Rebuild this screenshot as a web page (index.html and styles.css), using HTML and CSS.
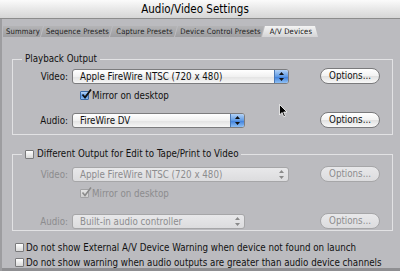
FILE: index.html
```html
<!DOCTYPE html>
<html>
  <head>
    <title>Audio/Video Settings</title>
    <meta charset="utf-8" />
    <link rel="stylesheet" href="styles.css">
  </head>
  <body>
    <div class="window">
      <div class="titlebar">Audio/Video Settings</div>
      <div class="tabs">
        <span class="tab first t-summary">Summary</span>
        <span class="tab t-sequence">Sequence Presets</span>
        <span class="tab t-capture">Capture Presets</span>
        <span class="tab t-device">Device Control Presets</span>
        <span class="tab active t-av">A/V Devices</span>
      </div>
      <div class="pane">
        <fieldset class="group">
          <legend>Playback Output</legend>
          <div class="row first-row">
            <span class="lbl">Video:</span>
            <span class="popup wide">Apple FireWire NTSC (720 x 480)<span class="arrows"><svg width="5" height="9" viewBox="0 0 5 9"><path d="M2.5 0L5 3H0z M2.5 9L5 6H0z" fill="#111"/></svg></span></span>
            <span class="btn">Options...</span>
          </div>
          <div class="row mirror">
            <span></span>
            <span class="check"><span class="cb on"><svg width="11" height="11" viewBox="0 0 11 11"><path d="M1.5 5.5L4 8.5L10 0.5" fill="none" stroke="#111" stroke-width="1.8"/></svg></span>Mirror on desktop</span>
          </div>
          <div class="row audio">
            <span class="lbl">Audio:</span>
            <span class="popup narrow">FireWire DV<span class="arrows"><svg width="5" height="9" viewBox="0 0 5 9"><path d="M2.5 0L5 3H0z M2.5 9L5 6H0z" fill="#111"/></svg></span></span>
            <span class="btn">Options...</span>
          </div>
        </fieldset>

        <fieldset class="group off">
          <legend><span class="check on-text"><span class="cb"></span>Different Output for Edit to Tape/Print to Video</span></legend>
          <div class="row first-row">
            <span class="lbl">Video:</span>
            <span class="popup wide">Apple FireWire NTSC (720 x 480)<span class="arrows"><svg width="5" height="9" viewBox="0 0 5 9"><path d="M2.5 0L5 3H0z M2.5 9L5 6H0z" fill="#8a8a8a"/></svg></span></span>
            <span class="btn">Options...</span>
          </div>
          <div class="row mirror">
            <span></span>
            <span class="check"><span class="cb dim"><svg width="11" height="11" viewBox="0 0 11 11"><path d="M1.5 5.5L4 8.5L10 0.5" fill="none" stroke="#8a8a8a" stroke-width="1.6"/></svg></span>Mirror on desktop</span>
          </div>
          <div class="row audio">
            <span class="lbl">Audio:</span>
            <span class="popup narrow">Built-in audio controller<span class="arrows"><svg width="5" height="9" viewBox="0 0 5 9"><path d="M2.5 0L5 3H0z M2.5 9L5 6H0z" fill="#8a8a8a"/></svg></span></span>
            <span class="btn">Options...</span>
          </div>
        </fieldset>

        <div class="opt first-opt"><span class="cb"></span>Do not show External A/V Device Warning when device not found on launch</div>
        <div class="opt"><span class="cb"></span>Do not show warning when audio outputs are greater than audio device channels</div>
      </div>

      <svg class="cursor" width="9" height="14" viewBox="0 0 9 14">
        <path d="M0.5 0.5L0.5 11L3 8.5L4.8 12.8L6.4 12.1L4.7 8L8 8Z" fill="#000" stroke="#fff" stroke-width="0.8"/>
      </svg>
    </div>
  </body>
</html>
```

FILE: styles.css
```css
body {
  margin: 0;
  background: #bbbbbf;
  font-family: "DejaVu Sans Condensed", "DejaVu Sans", sans-serif;
  font-size: 9.7px;
  color: #111;
}
.window {
  position: relative;
  width: 400px;
  height: 271px;
  overflow: hidden;
  background: #bbbbbf;
  box-shadow: inset 2px 0 0 #9d9da0, inset 0 -3px 0 #8f8f92;
}

.titlebar {
  height: 18px;
  line-height: 18px;
  padding-right: 10px;
  border-bottom: 1px solid #8c8c8c;
  background: linear-gradient(#fbfbfb, #e4e4e4 60%, #d6d6d6);
  text-align: center;
  font-size: 11.5px;
  color: #000;
}

.tabs {
  display: flex;
  height: 11px;
  margin: 7px 0 0 3px;
}
.tab {
  box-sizing: border-box;
  height: 11px;
  line-height: 11px;
  padding-left: 2px;
  margin-right: -2px;
  font-size: 7.6px;
  letter-spacing: 0.15px;
  text-align: center;
  white-space: nowrap;
  color: #222;
  background: linear-gradient(#b4b4b6, #9e9ea1);
  clip-path: polygon(3px 0, 100% 0, calc(100% - 3px) 100%, 0 100%);
}
.tab.first {
  padding-left: 0;
  clip-path: polygon(0 0, 100% 0, calc(100% - 3px) 100%, 0 100%);
}
.tab.active {
  color: #111;
  background: linear-gradient(#f4f4f4, #d4d4d6);
  clip-path: polygon(3px 0, calc(100% - 3px) 0, 100% 100%, 0 100%);
}
.t-summary {
  width: 40px;
}
.t-sequence {
  width: 71px;
}
.t-capture {
  width: 67px;
}
.t-device {
  width: 89px;
}
.t-av {
  width: 56px;
}

.pane {
  padding: 16px 0 0 12px;
}
.group {
  box-sizing: border-box;
  width: 381px;
  margin: 0;
  padding: 0 0 7px 0;
  border: 1px solid #e2e2e4;
}
.group legend {
  margin-left: 9px;
  padding: 0 3px;
  line-height: 12px;
}
.group.off {
  margin-top: 13px;
  padding-bottom: 2px;
}

.row {
  display: grid;
  grid-template-columns: 55px 244px 60px;
  column-gap: 4px;
  align-items: center;
  height: 15px;
}
.first-row {
  margin-top: 3px;
}
.off .first-row {
  margin-top: 6px;
}
.mirror {
  height: 12px;
  margin-top: 6px;
}
.audio {
  margin-top: 11px;
}
.off .audio {
  margin-top: 14px;
}
.lbl {
  text-align: right;
}

.popup {
  display: flex;
  align-items: center;
  box-sizing: border-box;
  height: 15px;
  padding-left: 7px;
  border: 1px solid #7c7c7e;
  border-radius: 3px;
  background: linear-gradient(#ffffff, #f1f1f1 50%, #e2e2e2 51%, #f6f6f6);
  white-space: nowrap;
}
.popup.wide {
  width: 217px;
}
.popup.narrow {
  width: 173px;
}
.arrows {
  display: flex;
  align-items: center;
  justify-content: center;
  width: 13px;
  height: 100%;
  margin-left: auto;
  border-left: 1px solid #4a78b4;
  border-radius: 0 2px 2px 0;
  background: linear-gradient(#b3d2f6, #5f9ae4 50%, #3a7cdb 51%, #8fc0f4);
}

.btn {
  box-sizing: border-box;
  height: 16px;
  line-height: 14px;
  border: 1px solid #7a7a7c;
  border-radius: 8px;
  background: linear-gradient(#ffffff, #f2f2f2 50%, #e0e0e0 51%, #f8f8f8);
  text-align: center;
}

.check {
  display: flex;
  align-items: center;
  padding-left: 8px;
}
.cb {
  position: relative;
  display: inline-block;
  box-sizing: border-box;
  width: 9px;
  height: 9px;
  margin-right: 3px;
  border: 1px solid #7a7a7c;
  border-radius: 1px;
  background: linear-gradient(#ffffff, #d8d8d8);
}
.cb svg {
  position: absolute;
  left: 0;
  top: -3px;
}
.cb.on {
  border-color: #3b6aa8;
  background: linear-gradient(#b8d6f8, #5b98e4 55%, #8cbdf2);
}
.cb.dim {
  border-color: #a2a2a4;
  background: linear-gradient(#e4e4e4, #cfcfcf);
}
.on-text {
  padding-left: 0;
}

.off .lbl,
.off .popup,
.off .btn,
.off .mirror .check {
  color: #8c8c8e;
}
.off .popup,
.off .btn {
  border-color: #a6a6a8;
  background: linear-gradient(#e8e8ea, #dcdcde);
}
.off .arrows {
  border-left: none;
  background: none;
}

.opt {
  display: flex;
  align-items: center;
  height: 12px;
  margin: 3px 0 0 3px;
}
.opt .cb {
  margin-right: 2px;
}
.first-opt {
  margin-top: 10px;
}

.cursor {
  position: absolute;
  left: 279px;
  top: 104px;
}
```
